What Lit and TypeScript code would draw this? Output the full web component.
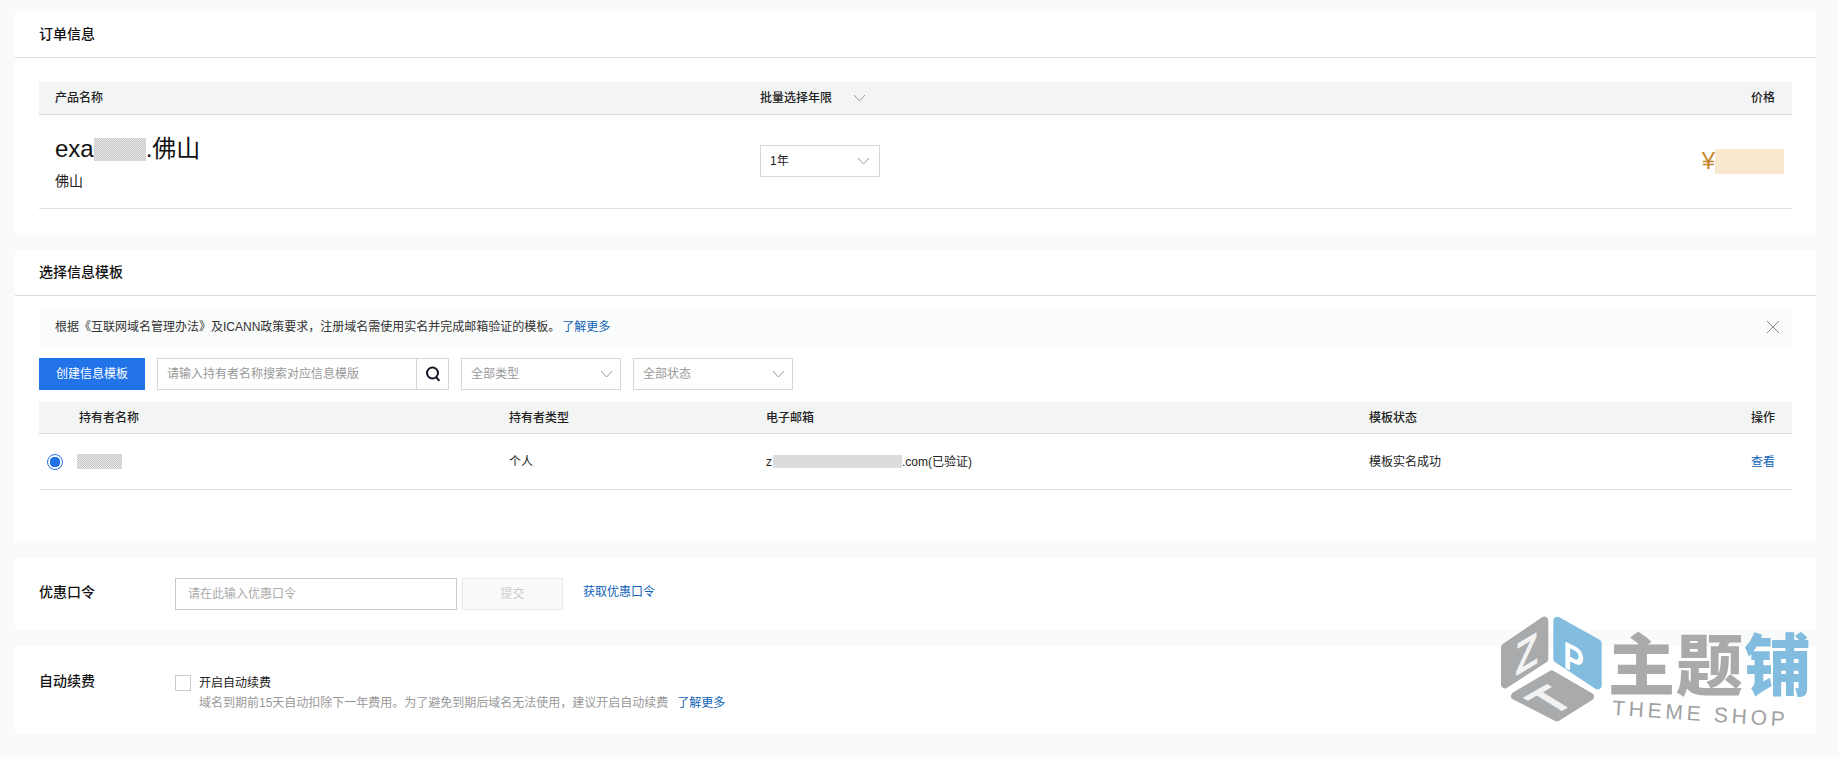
import { LitElement, css, html, svg } from 'lit'
import { customElement } from 'lit/decorators.js'

const chevron = html`<svg class="chevron" width="13" height="8" viewBox="0 0 13 8" fill="none">
  <path d="M1 1l5.5 6L12 1" stroke="#999" stroke-width="1" />
</svg>`

const logoShapes = svg`
  <g stroke-linejoin="round" stroke-width="24">
    <path d="M30 112 148 32V147L30 223Z" fill="#a9aaab" stroke="#a9aaab" />
    <path d="M187 32 308 100V226L187 147Z" fill="#82bde0" stroke="#82bde0" />
    <path d="M170 193 285 260 186 322 60 258Z" fill="#a9aaab" stroke="#a9aaab" />
  </g>
  <text transform="matrix(.83 -.5 0 1 60 200)" font-size="138" fill="#f2f2f2" font-family="Liberation Sans" font-weight="700">Z</text>
  <text transform="matrix(.8 .4 0 1 205 172)" font-size="116" fill="#fff" font-family="Liberation Sans" font-weight="700">P</text>
  <text transform="matrix(1.23 -.69 1.3 .8 172 319)" font-size="100" fill="#f2f2f2" font-family="Liberation Sans" font-weight="700">T</text>
`

@customElement('app-root')
export class AppRoot extends LitElement {
  protected render() {
    return html`
      <section class="card order">
        <h2 class="card-title">订单信息</h2>
        <div class="card-body">
          <div class="order-grid order-head">
            <span>产品名称</span>
            <span class="batch">批量选择年限 ${chevron}</span>
            <span class="right">价格</span>
          </div>
          <div class="order-grid order-row">
            <div class="domain-cell">
              <div class="domain">exa<i class="mask domain-mask"></i>.佛山</div>
              <div class="domain-sub">佛山</div>
            </div>
            <div class="select year"><span>1年</span>${chevron}</div>
            <div class="price">¥<i class="price-mask"></i></div>
          </div>
        </div>
      </section>

      <section class="card template">
        <h2 class="card-title">选择信息模板</h2>
        <div class="card-body">
          <div class="alert">
            <span>根据《互联网域名管理办法》及ICANN政策要求，注册域名需使用实名并完成邮箱验证的模板。<a>了解更多</a></span>
            <svg width="14" height="14" viewBox="0 0 14 14" fill="none">
              <path d="M1 1l12 12M13 1L1 13" stroke="#888" stroke-width="1" />
            </svg>
          </div>
          <div class="toolbar">
            <button class="primary">创建信息模板</button>
            <div class="search">
              <span>请输入持有者名称搜索对应信息模版</span>
              <div class="search-btn">
                <svg width="16" height="16" viewBox="0 0 16 16" fill="none">
                  <circle cx="7.5" cy="7" r="5.5" stroke="#14142b" stroke-width="2" />
                  <path d="M11 11l3.4 3.8" stroke="#14142b" stroke-width="2" />
                </svg>
              </div>
            </div>
            <div class="select filter"><span>全部类型</span>${chevron}</div>
            <div class="select filter"><span>全部状态</span>${chevron}</div>
          </div>
          <div class="holder-grid holder-head">
            <span></span>
            <span class="holder-name">持有者名称</span>
            <span>持有者类型</span>
            <span>电子邮箱</span>
            <span>模板状态</span>
            <span class="right">操作</span>
          </div>
          <div class="holder-grid holder-row">
            <span class="radio"></span>
            <span><i class="mask name-mask"></i></span>
            <span>个人</span>
            <span class="email">z<i class="mask-soft email-mask"></i>.com(已验证)</span>
            <span>模板实名成功</span>
            <a class="right">查看</a>
          </div>
        </div>
      </section>

      <section class="card form-row coupon">
        <div class="form-label">优惠口令</div>
        <div class="coupon-input">请在此输入优惠口令</div>
        <div class="coupon-submit">提交</div>
        <a class="coupon-link">获取优惠口令</a>
      </section>

      <section class="card form-row renew">
        <div class="form-label">自动续费</div>
        <span class="checkbox"></span>
        <div class="renew-text">
          <div>开启自动续费</div>
          <div class="renew-desc">域名到期前15天自动扣除下一年费用。为了避免到期后域名无法使用，建议开启自动续费<a>了解更多</a></div>
        </div>
      </section>

      <div class="watermark">
        <svg class="cube" width="115" height="115" viewBox="0 0 345 345">${logoShapes}</svg>
        <div class="brand">
          <div class="brand-cn">主题<b>铺</b></div>
          <div class="brand-en">THEME SHOP</div>
        </div>
      </div>
    `
  }

  static styles = css`
    :host {
      display: block;
      position: relative;
      box-sizing: border-box;
      height: 757px;
      padding: 12px 23px 0 15px;
      overflow: hidden;
      background: #f9fafa;
      color: #222;
      font: 12px/18px 'Liberation Sans', 'Noto Sans CJK SC', sans-serif;
    }

    a {
      color: #0f62b8;
    }

    i {
      display: inline-block;
    }

    .card {
      background: #fff;
    }

    .order {
      height: 221px;
      margin-bottom: 17px;
    }

    .template {
      height: 293px;
      margin-bottom: 15px;
    }

    .card-title {
      box-sizing: border-box;
      height: 46px;
      margin: 0;
      padding: 13px 24px 0;
      border-bottom: 1px solid #d9dbdd;
      font-size: 14px;
      font-weight: 500;
      line-height: 18px;
      color: #111;
    }

    .card-body {
      padding: 0 24px;
    }

    .right {
      text-align: right;
    }

    .order .card-body {
      padding-top: 24px;
    }

    .order-grid {
      display: grid;
      grid-template-columns: 705px 1fr 100px;
      padding: 0 17px 0 16px;
      align-items: center;
    }

    .order-head {
      height: 33px;
      box-sizing: border-box;
      background: #f3f4f4;
      border-bottom: 1px solid #d9dbdd;
      font-weight: 500;
    }

    .batch {
      display: flex;
      align-items: center;
      gap: 21px;
    }

    .order-row {
      height: 94px;
      box-sizing: border-box;
      padding-bottom: 1px;
      border-bottom: 1px solid #e0e2e4;
    }

    .domain-cell {
      padding-top: 3px;
    }

    .domain {
      display: flex;
      align-items: center;
      font-size: 24px;
      line-height: 28px;
      color: #111;
    }

    .mask {
      background: repeating-conic-gradient(#c2c2c2 0 25%, #ececec 0 50%) 0 0 / 2px 2px;
    }

    .mask-soft {
      background: #dcdcdc;
    }

    .domain-mask {
      width: 52px;
      height: 23px;
    }

    .domain-sub {
      margin-top: 9px;
      font-size: 14px;
      line-height: 18px;
    }

    .select {
      display: flex;
      box-sizing: border-box;
      height: 32px;
      align-items: center;
      justify-content: space-between;
      border: 1px solid #d5d7d9;
    }

    .year {
      width: 120px;
      padding: 0 9px;
    }

    .price {
      display: flex;
      justify-content: flex-end;
      align-items: center;
      margin-right: -9px;
      font-size: 24px;
      color: #c4872e;
    }

    .price-mask {
      width: 69px;
      height: 25px;
      background: repeating-conic-gradient(#f6e1c0 0 25%, #fbeedb 0 50%) 0 0 / 2px 2px;
    }

    .alert {
      display: flex;
      box-sizing: border-box;
      height: 38px;
      margin-top: 12px;
      padding: 0 12px 0 16px;
      justify-content: space-between;
      align-items: center;
      background: #fafbfb;
      color: #333;
    }

    .alert a {
      margin-left: 2px;
    }

    .toolbar {
      display: flex;
      gap: 12px;
      margin-top: 12px;
    }

    .primary {
      width: 106px;
      height: 32px;
      padding: 0;
      border: 0;
      background: #2273e8;
      color: #fff;
      font: inherit;
    }

    .search {
      display: flex;
      box-sizing: border-box;
      width: 292px;
      height: 32px;
      align-items: center;
      justify-content: space-between;
      padding-left: 9px;
      border: 1px solid #d5d7d9;
      color: #999;
    }

    .search-btn {
      display: flex;
      width: 31px;
      height: 30px;
      align-items: center;
      justify-content: center;
      border-left: 1px solid #d5d7d9;
    }

    .filter {
      width: 160px;
      padding: 0 7px 0 9px;
      color: #999;
    }

    .holder-grid {
      display: grid;
      grid-template-columns: 30px 432px 257px 603px 1fr 60px;
      padding: 0 17px 0 8px;
      align-items: center;
    }

    .holder-head {
      box-sizing: border-box;
      height: 32px;
      margin-top: 12px;
      background: #f3f4f4;
      border-bottom: 1px solid #d9dbdd;
      font-weight: 500;
    }

    .holder-name {
      padding-left: 2px;
    }

    .holder-row {
      box-sizing: border-box;
      height: 56px;
      border-bottom: 1px solid #e0e2e4;
    }

    .radio {
      box-sizing: border-box;
      width: 16px;
      height: 16px;
      border: 1px solid #2273e8;
      border-radius: 50%;
      background: radial-gradient(circle, #2273e8 0 5px, #fff 5.5px);
    }

    .name-mask {
      display: block;
      width: 45px;
      height: 15px;
    }

    .email {
      display: flex;
      align-items: center;
    }

    .email-mask {
      width: 129px;
      height: 13px;
      margin-left: 1px;
    }

    .form-row {
      display: flex;
      padding-left: 24px;
    }

    .form-label {
      width: 136px;
      flex: none;
      font-size: 14px;
      font-weight: 500;
      line-height: 18px;
      color: #111;
    }

    .coupon {
      height: 72px;
      margin-bottom: 16px;
      align-items: center;
    }

    .coupon .form-label,
    .coupon-link {
      margin-bottom: 4px;
    }

    .coupon-input {
      box-sizing: border-box;
      width: 282px;
      height: 32px;
      padding-left: 12px;
      border: 1px solid #c9cbcd;
      color: #aaa;
      line-height: 30px;
    }

    .coupon-submit {
      box-sizing: border-box;
      width: 101px;
      height: 32px;
      margin-left: 5px;
      border: 1px solid #e8e9ea;
      background: #fafafa;
      color: #ccc;
      line-height: 30px;
      text-align: center;
    }

    .coupon-link {
      margin-left: 20px;
    }

    .renew {
      height: 88px;
      padding-top: 26px;
      box-sizing: border-box;
    }

    .checkbox {
      box-sizing: border-box;
      width: 16px;
      height: 16px;
      margin-top: 3px;
      border: 1px solid #c9cbcd;
    }

    .renew-text {
      margin: 2px 0 0 8px;
    }

    .renew-desc {
      margin-top: 2px;
      color: #999;
    }

    .renew-desc a {
      margin-left: 9px;
    }

    .watermark {
      position: absolute;
      left: 1495px;
      top: 610px;
      display: flex;
      pointer-events: none;
    }

    .brand {
      margin-left: -2px;
      padding-top: 15px;
    }

    .brand-cn {
      font-family: 'Noto Sans CJK SC', sans-serif;
      font-size: 67px;
      font-weight: 900;
      line-height: 72px;
      letter-spacing: 1px;
      color: #a9aaab;
      white-space: nowrap;
    }

    .brand-cn b {
      color: #82bde0;
      font-weight: 900;
    }

    .brand-en {
      margin: -2px 0 0 5px;
      font-size: 21px;
      line-height: 26px;
      letter-spacing: 3.8px;
      color: #a0a1a2;
      white-space: nowrap;
      transform: rotate(3.8deg);
      transform-origin: left top;
    }
  `
}

declare global {
  interface HTMLElementTagNameMap {
    'app-root': AppRoot
  }
}
